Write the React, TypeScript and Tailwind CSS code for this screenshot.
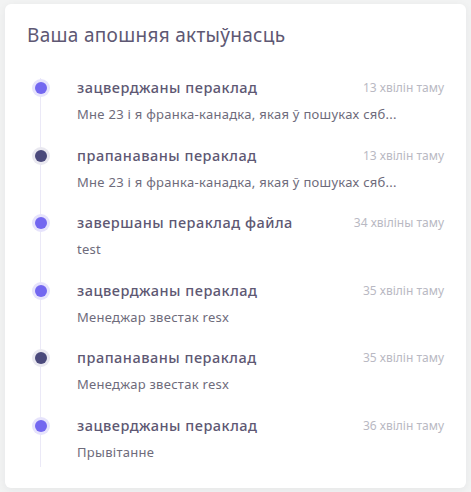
import React from "react";

type Item = { title: string; time: string; sub: string; dark?: boolean };

const items: Item[] = [
  { title: "зацверджаны пераклад", time: "13 хвілін таму", sub: "Мне 23 і я франка-канадка, якая ў пошуках сяб..." },
  { title: "прапанаваны пераклад", time: "13 хвілін таму", sub: "Мне 23 і я франка-канадка, якая ў пошуках сяб...", dark: true },
  { title: "завершаны пераклад файла", time: "34 хвіліны таму", sub: "test" },
  { title: "зацверджаны пераклад", time: "35 хвілін таму", sub: "Менеджар звестак resx" },
  { title: "прапанаваны пераклад", time: "35 хвілін таму", sub: "Менеджар звестак resx", dark: true },
  { title: "зацверджаны пераклад", time: "36 хвілін таму", sub: "Прывітанне" },
];

export default function App() {
  return (
    <div className="min-h-screen w-full bg-[#f2f3f3] pt-[4px] px-[5px]" style={{ fontFamily: '"Noto Sans", "Open Sans", sans-serif' }}>
      <div className="w-[461px] h-[484px] bg-white rounded-[6px] shadow-[0_2px_8px_rgba(34,41,47,0.06)] px-[22px] pt-[17px]">
        <h2 className="text-[19px] leading-[28px] font-normal tracking-[0.3px] text-[#5e5873]">Ваша апошняя актыўнасць</h2>
        <ul className="mt-[29px] ml-[13px] border-l border-[#ebe9f7] flex flex-col gap-[21.5px] pb-[5.5px]">
          {items.map((it, i) => (
            <li key={i} className="relative pl-[36px]">
              <span
                className={
                  "absolute left-[-9.5px] top-[1px] w-[18px] h-[18px] rounded-full flex items-center justify-center " +
                  (it.dark ? "bg-[#e9e8f0]" : "bg-[#e6e3fc]")
                }
              >
                <span className={"w-[12px] h-[12px] rounded-full " + (it.dark ? "bg-[#4b4a7c]" : "bg-[#7367f0]")} />
              </span>
              <div className="flex items-center justify-between h-[20px]">
                <span className="text-[14.5px] font-medium tracking-[0.5px] text-[#5e5873]">{it.title}</span>
                <span className="text-[12px] text-[#b9b9c3]">{it.time}</span>
              </div>
              <div className="mt-[6px] h-[20px] leading-[20px] text-[13px] tracking-[0.28px] text-[#6e6b7b]">{it.sub}</div>
            </li>
          ))}
        </ul>
      </div>
    </div>
  );
}
